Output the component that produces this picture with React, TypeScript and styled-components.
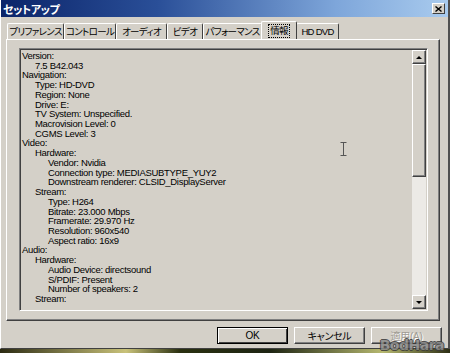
import React from "react";
import styled, { createGlobalStyle } from "styled-components";

const GlobalStyle = createGlobalStyle`
  html, body {
    margin: 0;
    padding: 0;
    background: #141a0c;
  }
  body {
    font-family: "Liberation Sans", "Noto Sans CJK JP", sans-serif;
  }
`;

const Screen = styled.div`
  position: relative;
  width: 450px;
  height: 353px;
  overflow: hidden;
  background: linear-gradient(90deg, #2b2a12 0%, #c9c27a 28%, #2a3010 40%, #1d2412 60%, #b6b870 85%, #2c2e14 100%);
`;

const Window = styled.div`
  width: 450px;
  height: 349px;
  box-sizing: border-box;
  background: #d4d0c8;
  border-left: 1px solid #ffffff;
  border-right: 2px solid #505050;
  border-bottom: 1px solid #404040;
  display: flex;
  flex-direction: column;
`;

const TitleBar = styled.div`
  height: 17px;
  display: flex;
  align-items: center;
  justify-content: space-between;
  padding: 0 3px 0 2px;
  background: linear-gradient(90deg, #0b2469 0%, #2a4f98 35%, #7ea6da 75%, #a9cbee 100%);
`;

const Title = styled.span`
  color: #ffffff;
  font-family: "Noto Sans CJK JP", sans-serif;
  font-feature-settings: "palt";
  font-weight: 700;
  font-size: 11px;
  letter-spacing: -0.4px;
`;

const CloseBtn = styled.div`
  width: 13px;
  height: 11px;
  box-sizing: border-box;
  background: #d4d0c8;
  border: 1px solid;
  border-color: #ffffff #404040 #404040 #ffffff;
  display: flex;
  align-items: center;
  justify-content: center;
`;

const TabRow = styled.div`
  display: flex;
  align-items: flex-end;
  height: 18px;
  margin-top: 4px;
  padding-left: 6px;
`;

const Tab = styled.div<{ $w: number; $active?: boolean }>`
  width: ${(p) => p.$w}px;
  height: ${(p) => (p.$active ? 18 : 16)}px;
  box-sizing: border-box;
  display: flex;
  align-items: center;
  justify-content: center;
  border-top: 1px solid #ffffff;
  border-left: 1px solid #ffffff;
  border-right: 1px solid #404040;
  border-radius: 2px 2px 0 0;
  margin: ${(p) => (p.$active ? "0 -1px 0 -1px" : "0")};
  position: relative;
  z-index: ${(p) => (p.$active ? 2 : 1)};
  background: #d4d0c8;
  white-space: nowrap;
  color: #000000;
`;

const TabLabel = styled.span<{ $focus?: boolean }>`
  padding: 0 1px;
  line-height: 12px;
  outline: ${(p) => (p.$focus ? "1px dotted #000" : "none")};
  font-family: "Liberation Sans", "Noto Sans CJK JP", sans-serif;
  font-feature-settings: "palt";
  font-size: 9.5px;
  letter-spacing: -0.7px;
  white-space: nowrap;
`;

const Panel = styled.div`
  margin: 0 8px 0 5px;
  height: 282px;
  box-sizing: border-box;
  border: 1px solid;
  border-color: #ffffff #404040 #404040 #ffffff;
  box-shadow: inset -1px -1px 0 #808080;
  padding: 8px 11px 9px 12px;
  display: flex;
`;

const InfoBox = styled.div`
  flex: 1;
  display: flex;
  box-sizing: border-box;
  border: 1px solid;
  border-color: #808080 #ffffff #ffffff #808080;
  box-shadow: inset 1px 1px 0 #404040, inset -1px -1px 0 #d4d0c8;
`;

const Lines = styled.div`
  flex: 1;
  padding: 2px 0 0 2px;
  font-family: "Liberation Sans", sans-serif;
  font-size: 9.5px;
  letter-spacing: -0.3px;
  line-height: 9.72px;
  color: #000000;
  overflow: hidden;
`;

const Line = styled.div<{ $level: number }>`
  padding-left: ${(p) => p.$level * 13}px;
  white-space: nowrap;
`;

const ScrollBar = styled.div`
  width: 14px;
  display: flex;
  flex-direction: column;
  margin: 1px 1px 1px 0;
`;

const ArrowBtn = styled.div`
  height: 14px;
  box-sizing: border-box;
  background: #d4d0c8;
  border: 1px solid;
  border-color: #ffffff #404040 #404040 #ffffff;
  box-shadow: inset -1px -1px 0 #808080;
  display: flex;
  align-items: center;
  justify-content: center;
`;

const Arrow = styled.div<{ $down?: boolean }>`
  width: 0;
  height: 0;
  border-left: 3px solid transparent;
  border-right: 3px solid transparent;
  ${(p) => (p.$down ? "border-top: 3px solid #000;" : "border-bottom: 3px solid #000;")}
`;

const Track = styled.div`
  flex: 1;
  display: flex;
  flex-direction: column;
  background: #eceae6;
`;

const Thumb = styled.div`
  height: 113px;
  box-sizing: border-box;
  background: #d4d0c8;
  border: 1px solid;
  border-color: #ffffff #404040 #404040 #ffffff;
  box-shadow: inset -1px -1px 0 #808080;
`;

const ButtonRow = styled.div`
  display: flex;
  justify-content: flex-end;
  gap: 6px;
  padding: 6px 6px 0 0;
`;

const Button = styled.div<{ $default?: boolean; $disabled?: boolean }>`
  width: 71px;
  height: 17px;
  box-sizing: border-box;
  background: #d4d0c8;
  border: 1px solid;
  border-color: ${(p) => (p.$default ? "#000" : "#ffffff #404040 #404040 #ffffff")};
  box-shadow: ${(p) =>
    p.$default
      ? "inset 1px 1px 0 #ffffff, inset -1px -1px 0 #404040"
      : "inset -1px -1px 0 #808080"};
  display: flex;
  align-items: center;
  justify-content: center;
  font-family: "Liberation Sans", "Noto Sans CJK JP", sans-serif;
  font-feature-settings: "palt";
  font-size: 10px;
  letter-spacing: -0.3px;
  color: ${(p) => (p.$disabled ? "#a09c94" : "#000")};
  text-shadow: ${(p) => (p.$disabled ? "1px 1px 0 #ffffff" : "none")};
`;

const Watermark = styled.div`
  position: absolute;
  right: 6px;
  bottom: 0;
  line-height: 15px;
  font-family: "DejaVu Sans", sans-serif;
  font-weight: 700;
  font-size: 14px;
  letter-spacing: -0.5px;
  color: #8a8a8a;
  opacity: 0.85;
  text-shadow: 1px 0 0 #3a3a3a, -1px 0 0 #3a3a3a, 0 1px 0 #3a3a3a, 0 -1px 0 #3a3a3a;
`;

const Cursor = styled.svg`
  position: absolute;
  left: 340px;
  top: 142px;
`;

const lines: [number, string][] = [
  [0, "Version:"],
  [1, "7.5 B42.043"],
  [0, "Navigation:"],
  [1, "Type: HD-DVD"],
  [1, "Region: None"],
  [1, "Drive: E:"],
  [1, "TV System: Unspecified."],
  [1, "Macrovision Level: 0"],
  [1, "CGMS Level: 3"],
  [0, "Video:"],
  [1, "Hardware:"],
  [2, "Vendor: Nvidia"],
  [2, "Connection type: MEDIASUBTYPE_YUY2"],
  [2, "Downstream renderer: CLSID_DisplayServer"],
  [1, "Stream:"],
  [2, "Type: H264"],
  [2, "Bitrate: 23.000 Mbps"],
  [2, "Framerate: 29.970 Hz"],
  [2, "Resolution: 960x540"],
  [2, "Aspect ratio: 16x9"],
  [0, "Audio:"],
  [1, "Hardware:"],
  [2, "Audio Device: directsound"],
  [2, "S/PDIF: Present"],
  [2, "Number of speakers: 2"],
  [1, "Stream:"],
];

const tabs = [
  { label: "プリファレンス", w: 57 },
  { label: "コントロール", w: 52 },
  { label: "オーディオ", w: 51 },
  { label: "ビデオ", w: 36 },
  { label: "パフォーマンス", w: 59 },
  { label: "情報", w: 36, active: true },
  { label: "HD DVD", w: 43 },
];

export default function App() {
  return (
    <Screen>
      <GlobalStyle />
      <Window>
        <TitleBar>
          <Title>セットアップ</Title>
          <CloseBtn>
            <svg width="7" height="6" viewBox="0 0 7 6">
              <path d="M0.5 0.5 L6.5 5.5 M6.5 0.5 L0.5 5.5" stroke="#000" strokeWidth="1.4" />
            </svg>
          </CloseBtn>
        </TitleBar>
        <TabRow>
          {tabs.map((t) => (
            <Tab key={t.label} $w={t.w} $active={t.active}>
              <TabLabel $focus={t.active}>{t.label}</TabLabel>
            </Tab>
          ))}
        </TabRow>
        <Panel>
          <InfoBox>
            <Lines>
              {lines.map(([lvl, text], i) => (
                <Line key={i} $level={lvl}>
                  {text}
                </Line>
              ))}
            </Lines>
            <ScrollBar>
              <ArrowBtn>
                <Arrow />
              </ArrowBtn>
              <Track>
                <Thumb />
              </Track>
              <ArrowBtn>
                <Arrow $down />
              </ArrowBtn>
            </ScrollBar>
          </InfoBox>
        </Panel>
        <ButtonRow>
          <Button $default>OK</Button>
          <Button>キャンセル</Button>
          <Button $disabled>適用(A)</Button>
        </ButtonRow>
      </Window>
      <Cursor width="7" height="14" viewBox="0 0 7 14">
        <path d="M0.5 0.5 H6.5 M3.5 0.5 V13.5 M0.5 13.5 H6.5" stroke="#555" strokeWidth="1" fill="none" />
      </Cursor>
      <Watermark>BodHara</Watermark>
    </Screen>
  );
}
